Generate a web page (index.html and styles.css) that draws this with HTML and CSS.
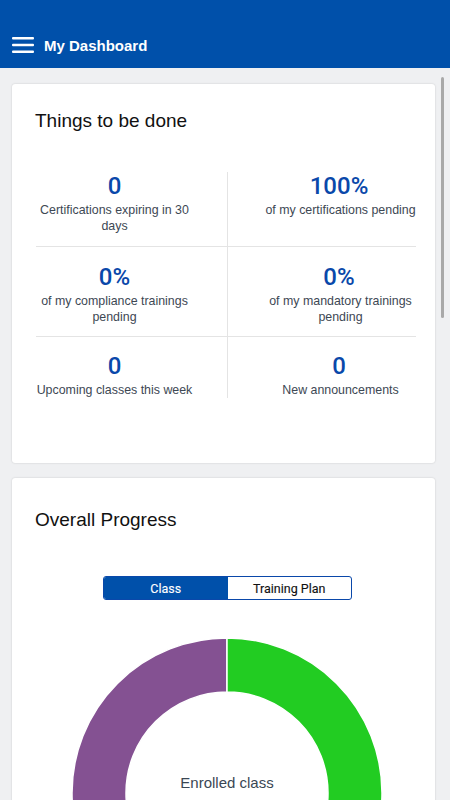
FILE: index.html
```html
<!DOCTYPE html>
<html>
<head>
<meta charset="utf-8">
<link rel="stylesheet" href="styles.css">
</head>
<body>
<div class="app">
  <header class="topbar">
    <svg class="menu" width="22" height="16" viewBox="0 0 22 16"><rect x="0" y="0" width="22" height="2.6" rx="1" fill="#fff"/><rect x="0" y="6.7" width="22" height="2.6" rx="1" fill="#fff"/><rect x="0" y="13.4" width="22" height="2.6" rx="1" fill="#fff"/></svg>
    <span class="title">My Dashboard</span>
  </header>
  <main class="content">
    <section class="card todo">
      <h2 class="card-title">Things to be done</h2>
      <div class="grid">
        <div class="cell left r1"><div class="num">0</div><div class="lbl">Certifications expiring in 30 days</div></div>
        <div class="cell right r1"><div class="num">100%</div><div class="lbl">of my certifications pending</div></div>
        <div class="cell left r2"><div class="num">0%</div><div class="lbl">of my compliance trainings pending</div></div>
        <div class="cell right r2"><div class="num">0%</div><div class="lbl">of my mandatory trainings pending</div></div>
        <div class="cell left r3"><div class="num">0</div><div class="lbl">Upcoming classes this week</div></div>
        <div class="cell right r3"><div class="num">0</div><div class="lbl">New announcements</div></div>
      </div>
    </section>
    <section class="card progress">
      <h2 class="card-title">Overall Progress</h2>
      <div class="toggle">
        <div class="seg active">Class</div>
        <div class="seg">Training Plan</div>
      </div>
      <div class="donut">
        <svg width="312" height="312" viewBox="-1 -1 312 312">
          <path d="M155 0 A155 155 0 0 0 155 310 L155 256 A101 101 0 0 1 155 54 Z" fill="#845192" stroke="#fff" stroke-width="1.5"/>
          <path d="M155 0 A155 155 0 0 1 155 310 L155 256 A101 101 0 0 0 155 54 Z" fill="#22cc22" stroke="#fff" stroke-width="1.5"/>
        </svg>
        <div class="donut-label">Enrolled class</div>
      </div>
    </section>
  </main>
  <div class="scrollthumb"></div>
</div>
</body>
</html>
```
FILE: styles.css
```css
html, body {
  margin: 0;
  padding: 0;
  height: 800px;
  overflow: hidden;
}
body {
  background: #eff0f2;
  font-family: "Liberation Sans", Arial, sans-serif;
}
.app {
  position: relative;
  height: 800px;
  overflow: hidden;
}
.topbar {
  height: 68px;
  background: #0050aa;
  display: flex;
  align-items: center;
  padding: 22px 0 0 12px;
  box-sizing: border-box;
  gap: 10px;
}
.menu {
  display: block;
}
.title {
  color: #fff;
  font-weight: bold;
  font-size: 15px;
  letter-spacing: 0;
}
.content {
  padding: 16px 15px 0 12px;
  display: flex;
  flex-direction: column;
  gap: 15px;
}
.card {
  background: #fff;
  border-radius: 3px;
  box-shadow: 0 0 2px rgba(0,0,0,0.18);
  padding: 26px 19px 0 24px;
}
.todo {
  height: 379px;
  box-sizing: border-box;
}
.card-title {
  margin: 0 0 0 -1px;
  font-weight: normal;
  font-size: 19px;
  line-height: 22px;
  color: #111;
}
.grid {
  margin-top: 40px;
  display: grid;
  grid-template-columns: 192px 188px;
}
.cell {
  text-align: center;
}
.cell.left {
  border-right: 1px solid #e4e4e4;
  padding-right: 34px;
}
.cell.right {
  padding-left: 34px;
}
.r1 { padding-bottom: 13px; }
.r2 { padding-top: 16px; padding-bottom: 12px; }
.r3 { padding-top: 15px; }
.r1, .r2 { box-shadow: inset 0 -1px 0 #e4e4e4; }
.cell.right .lbl { margin-right: -3px; }
.num {
  font-family: Roboto, "Liberation Sans", sans-serif;
  font-size: 24px;
  line-height: 28px;
  font-weight: 500;
  color: #0a48aa;
}
.lbl {
  margin-top: 2px;
  font-size: 12.4px;
  line-height: 16px;
  color: #3d4854;
}
.progress {
  height: 400px;
  padding-top: 31px;
}
.toggle {
  margin: 45px 0 0 67px;
  width: 249px;
  height: 24px;
  box-sizing: border-box;
  border: 1px solid #0a48aa;
  border-radius: 3px;
  display: flex;
  overflow: hidden;
  font-family: Roboto, "Liberation Sans", sans-serif;
  font-size: 12.5px;
  font-weight: 400;
  -webkit-text-stroke: 0.12px currentColor;
}
.seg {
  flex: 1;
  display: flex;
  align-items: center;
  justify-content: center;
  color: #111;
}
.seg.active {
  background: #0050aa;
  color: #fff;
}
.donut {
  position: relative;
  width: 312px;
  margin: 37px auto 0;
  transform: translateX(1px);
}
.donut svg {
  display: block;
}
.donut-label {
  position: absolute;
  left: 0;
  right: 0;
  top: 137px;
  text-align: center;
  font-size: 15px;
  color: #3a4754;
}
.scrollthumb {
  position: absolute;
  right: 6px;
  top: 77px;
  width: 3.5px;
  height: 241px;
  border-radius: 2px;
  background: #a9a9a9;
}
```
